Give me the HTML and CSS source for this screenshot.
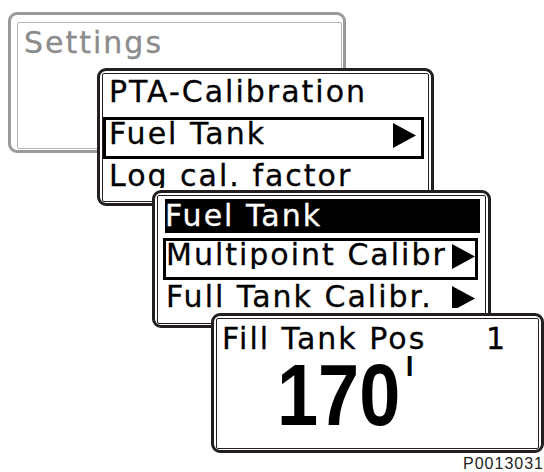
FILE: index.html
```html
<!DOCTYPE html>
<html lang="en">
<head>
    <meta charset="UTF-8">
    <meta name="viewport" content="width=device-width, initial-scale=1.0">
    <title>Fuel Tank calibration</title>
    <link rel="stylesheet" href="styles.css">
</head>
<body>

<div class="canvas">

    <!-- level 0: settings (greyed out) -->
    <div class="panel panel-settings">
        <div class="screen">Settings</div>
    </div>

    <!-- level 1 -->
    <div class="panel panel-menu">
        <div class="screen">
            <div class="view">
                <div class="row"><span class="label">PTA-Calibration</span></div>
                <div class="row selected">
                    <span class="label">Fuel Tank</span>
                    <svg class="arrow" viewBox="0 0 23 25"><polygon points="0,0 23,12.5 0,25"/></svg>
                </div>
                <div class="row"><span class="label">Log cal. factor</span></div>
            </div>
        </div>
    </div>

    <!-- level 2 -->
    <div class="panel panel-sub">
        <div class="screen">
            <div class="view">
                <div class="head">Fuel Tank</div>
                <div class="row selected">
                    <span class="label">Multipoint Calibr</span>
                    <svg class="arrow" viewBox="0 0 23 25"><polygon points="0,0 23,12.5 0,25"/></svg>
                </div>
                <div class="row">
                    <span class="label">Full Tank Calibr.</span>
                    <svg class="arrow" viewBox="0 0 23 25"><polygon points="0,0 23,12.5 0,25"/></svg>
                </div>
            </div>
        </div>
    </div>

    <!-- level 3: value -->
    <div class="panel panel-value">
        <div class="screen">
            <div class="value-head">
                <span>Fill Tank Pos</span>
                <span>1</span>
            </div>
            <div class="value-big">
                <span class="num">170</span>
                <span class="unit">l</span>
            </div>
        </div>
    </div>

    <div class="code">P0013031</div>
</div>

</body>
</html>
```

FILE: styles.css
```css
body {
    margin: 0;
    background: #ffffff;
    font-family: "DejaVu Sans", sans-serif;
    overflow: hidden;
}

.canvas {
    position: relative;
    width: 544px;
    height: 472px;
}

/* display windows */
.panel {
    position: absolute;
    box-sizing: border-box;
    display: flex;
    border: 3px solid #231f20;
    border-radius: 9px;
    background: #ffffff;
    padding: 2px 2px 1px 2px;
}

.screen {
    flex: 1;
    min-width: 0;
    border: 1px solid #231f20;
    border-radius: 2px;
    font-size: 30px;
    line-height: 28px;
    letter-spacing: 2px;
    color: #000000;
    -webkit-text-stroke: 0.3px currentColor;
}

.view {
    box-sizing: border-box;
    overflow: hidden;
}

.row {
    display: flex;
    align-items: flex-start;
    justify-content: space-between;
    box-sizing: border-box;
    height: 42px;
    border: 3px solid transparent;
    white-space: nowrap;
}

.row.selected {
    border-color: #000000;
}

.label {
    min-width: 0;
    overflow: hidden;
}

.arrow {
    flex-shrink: 0;
    width: 23px;
    height: 25px;
    margin-top: 3px;
    fill: #000000;
}

/* settings */
.panel-settings {
    left: 8px;
    top: 12px;
    width: 338px;
    height: 141px;
    border-color: #9a9a9a;
    padding: 7px 1px 1px 6px;
}

.panel-settings .screen {
    border-color: #b5b5b5;
    color: #8c8c8c;
    padding: 6px 0 0 6px;
}

/* first menu */
.panel-menu {
    left: 97px;
    top: 68px;
    width: 337px;
    height: 138px;
}

.panel-menu .view {
    height: 114px;
    padding-top: 1px;
}

.panel-menu .row {
    margin-right: 4px;
    padding: 0 5px 0 3px;
}

/* sub menu */
.panel-sub {
    left: 152px;
    top: 190px;
    width: 339px;
    height: 138px;
}

.panel-sub .view {
    height: 112px;
}

.head {
    box-sizing: border-box;
    height: 34px;
    margin: 3px 5px 5px 7px;
    padding-top: 3px;
    background: #000000;
    color: #ffffff;
}

.panel-sub .row {
    margin: 0 7px 0 5px;
}

/* value screen */
.panel-value {
    left: 211px;
    top: 313px;
    width: 333px;
    height: 140px;
}

.value-head {
    display: flex;
    justify-content: space-between;
    padding: 6px 31px 0 5px;
}

.value-big {
    display: flex;
    align-items: flex-start;
    padding-left: 60px;
    margin-top: -2px;
}

.num {
    font: bold 88px/88px "Liberation Sans", sans-serif;
    letter-spacing: 0;
    -webkit-text-stroke: 0;
    transform: scaleX(0.84);
    transform-origin: left top;
}

.unit {
    font: bold 28px/28px "Liberation Sans", sans-serif;
    letter-spacing: 0;
    -webkit-text-stroke: 0;
    margin: 2px 0 0 -18px;
}

.code {
    position: absolute;
    right: 0;
    top: 456px;
    font: 16px/16px "Liberation Sans", sans-serif;
    letter-spacing: 1px;
    color: #222222;
}
```
